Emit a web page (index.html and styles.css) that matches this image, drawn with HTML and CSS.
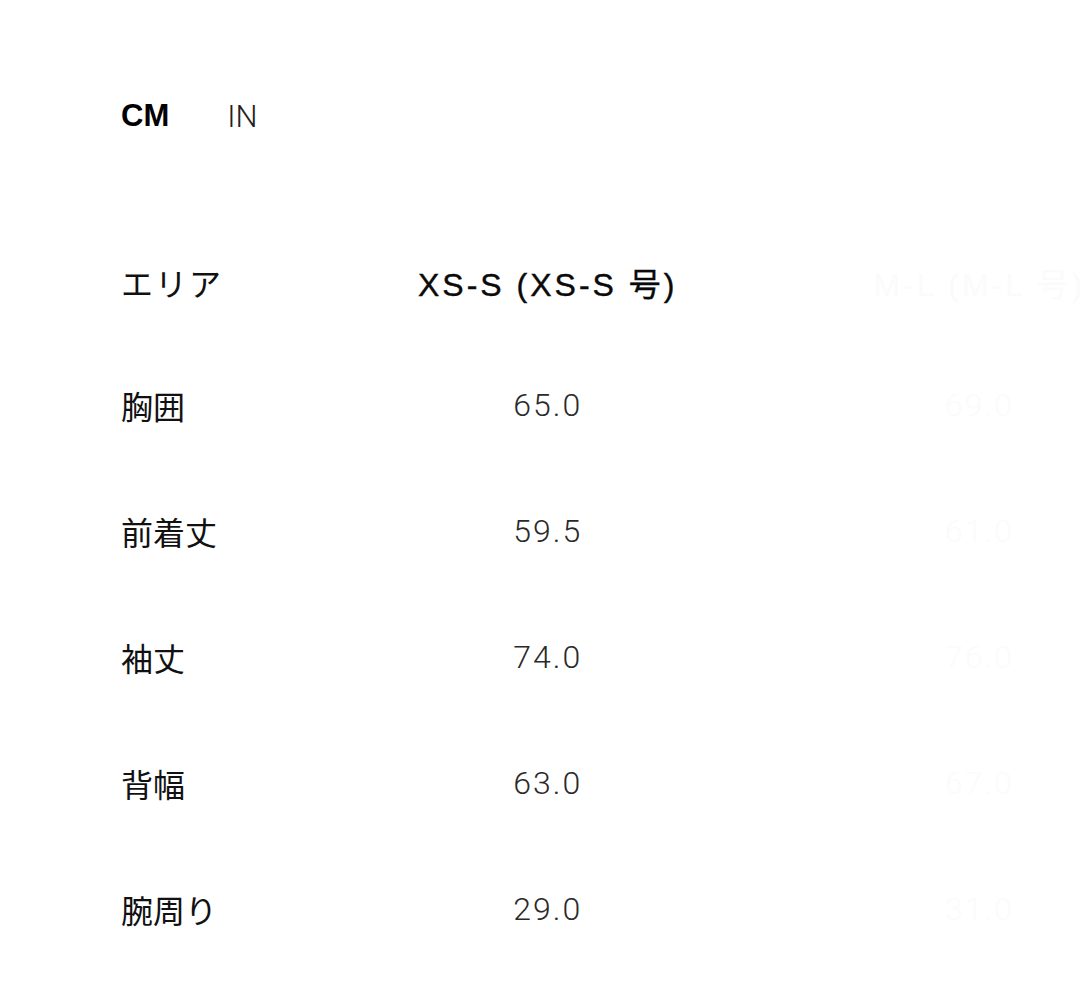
FILE: index.html
```html
<!DOCTYPE html>
<html lang="ja">
<head>
<meta charset="utf-8">
<title>サイズ表</title>
<link rel="stylesheet" href="styles.css">
</head>
<body>
<div class="page">
  <div class="units">
    <span class="unit unit-active">CM</span>
    <span class="unit">IN</span>
  </div>
  <div class="table-wrap">
    <div class="size-table">
      <div class="cell head label">エリア</div>
      <div class="cell head size">XS-S (XS-S 号)</div>
      <div class="cell head size faint">M-L (M-L 号)</div>

      <div class="cell label">胸囲</div>
      <div class="cell value">65.0</div>
      <div class="cell value faint">69.0</div>

      <div class="cell label">前着丈</div>
      <div class="cell value">59.5</div>
      <div class="cell value faint">61.0</div>

      <div class="cell label">袖丈</div>
      <div class="cell value">74.0</div>
      <div class="cell value faint">76.0</div>

      <div class="cell label">背幅</div>
      <div class="cell value">63.0</div>
      <div class="cell value faint">67.0</div>

      <div class="cell label">腕周り</div>
      <div class="cell value">29.0</div>
      <div class="cell value faint">31.0</div>
    </div>
  </div>
</div>
</body>
</html>
```

FILE: styles.css
```css
html, body {
  margin: 0;
  padding: 0;
  background: #ffffff;
}

body {
  font-family: "Liberation Sans", "Noto Sans CJK JP", sans-serif;
  color: #111111;
  width: 1080px;
  height: 993px;
  overflow: hidden;
}

.page {
  padding: 86px 0 0 121px;
}

.units {
  display: flex;
  align-items: center;
  gap: 58px;
  height: 60px;
}

.unit {
  font-family: "Roboto", "Liberation Sans", sans-serif;
  font-weight: 300;
  font-size: 31px;
  color: #222222;
}

.unit-active {
  font-family: "Liberation Sans", sans-serif;
  font-weight: 700;
  color: #000000;
}

.table-wrap {
  margin-top: 76px;
  overflow: hidden;
}

.size-table {
  display: grid;
  grid-template-columns: 199px max-content max-content;
  grid-template-rows: 120px repeat(5, 126px);
}

.cell {
  display: flex;
  align-items: center;
  justify-content: center;
  padding: 0 98px;
  white-space: nowrap;
}

.cell.label {
  justify-content: flex-start;
  padding: 0;
  font-family: "Noto Sans CJK JP", sans-serif;
  font-size: 32px;
  color: #111111;
}

.head {
  font-size: 32px;
  letter-spacing: 3px;
  color: #0a0a0a;
}

.head.size {
  font-family: "Liberation Sans", "Noto Sans CJK JP", sans-serif;
  font-weight: 400;
  -webkit-text-stroke: 0.4px #0a0a0a;
}

.head.label {
  letter-spacing: 2px;
}

.value {
  font-family: "Roboto", "Liberation Sans", sans-serif;
  font-weight: 300;
  font-size: 32px;
  color: #2a2a2a;
  letter-spacing: 2px;
}

.faint,
.head.size.faint {
  color: #fbfbfb;
  -webkit-text-stroke: 0;
}
```
